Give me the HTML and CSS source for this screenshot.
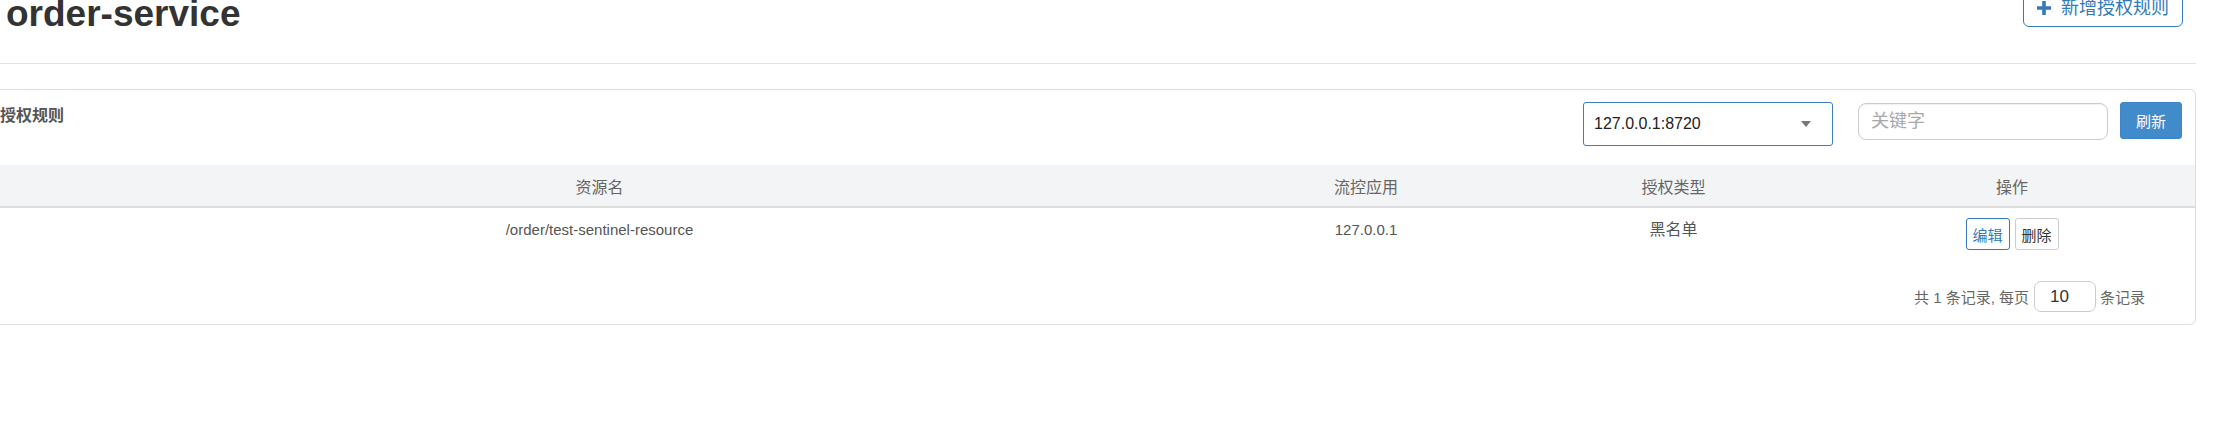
FILE: index.html
```html
<!DOCTYPE html>
<html lang="zh-CN">
<head>
<meta charset="utf-8">
<title>order-service</title>
<link rel="stylesheet" href="styles.css">
</head>
<body>
<div class="page">
  <div class="top">
    <h1 class="title">order-service</h1>
    <button class="btn-add" type="button">
      <svg class="plus" viewBox="0 0 14 14" width="14" height="14" aria-hidden="true"><path d="M5.2 0h3.6v5.2H14v3.6H8.8V14H5.2V8.8H0V5.2h5.2z" fill="#337ab7"/></svg>
      <span>新增授权规则</span>
    </button>
  </div>
  <div class="divider"></div>
  <div class="card">
    <div class="card-head">
      <div class="card-title">授权规则</div>
      <div class="controls">
        <div class="select"><span>127.0.0.1:8720</span><i class="caret"></i></div>
        <input class="search" type="text" placeholder="关键字">
        <button class="btn-refresh" type="button">刷新</button>
      </div>
    </div>
    <table class="rules">
      <thead>
        <tr>
          <th class="c-res">资源名</th>
          <th class="c-app">流控应用</th>
          <th class="c-type">授权类型</th>
          <th class="c-op">操作</th>
        </tr>
      </thead>
      <tbody>
        <tr>
          <td>/order/test-sentinel-resource</td>
          <td>127.0.0.1</td>
          <td class="cjk">黑名单</td>
          <td>
            <div class="ops">
              <button class="btn-sm btn-edit" type="button">编辑</button>
              <button class="btn-sm btn-del" type="button">删除</button>
            </div>
          </td>
        </tr>
      </tbody>
    </table>
    <div class="pager">
      <span>共 1 条记录, 每页</span>
      <div class="page-size">10</div>
      <span>条记录</span>
    </div>
  </div>
</div>
</body>
</html>
```

FILE: styles.css
```css
html, body {
  margin: 0;
  padding: 0;
  background: #fff;
}
body {
  font-family: "Liberation Sans", "Noto Sans CJK SC", sans-serif;
  color: #555;
  overflow: hidden;
}
.page {
  margin: 0 28px 0 -16px;
}
.top {
  display: flex;
  justify-content: space-between;
  align-items: flex-start;
  margin-top: -11px;
  padding: 0 13px 0 22px;
}
.title {
  margin: 5px 0 0 0;
  font-size: 37px;
  line-height: 40px;
  font-weight: bold;
  color: #333;
}
.btn-add {
  box-sizing: border-box;
  height: 38px;
  width: 160px;
  display: flex;
  align-items: center;
  gap: 10px;
  padding: 0 13px;
  border: 1px solid #337ab7;
  border-radius: 6px;
  background: #fff;
  color: #337ab7;
  font-family: "Liberation Sans", "Noto Sans CJK SC", sans-serif;
  font-size: 18px;
  line-height: 20px;
}
.plus {
  display: block;
  flex: none;
}
.divider {
  height: 1px;
  background: #e3e3e3;
  margin-top: 29px;
}
.card {
  margin-top: 25px;
  border: 1px solid #ddd;
  border-radius: 6px;
  background: #fff;
  overflow: hidden;
}
.card-head {
  display: flex;
  justify-content: space-between;
  align-items: flex-start;
  padding: 12px 13px 19px 15px;
}
.card-title {
  margin-top: 4px;
  font-size: 16px;
  line-height: 20px;
  font-weight: 600;
  color: #555;
}
.controls {
  display: flex;
  align-items: flex-start;
}
.select {
  box-sizing: border-box;
  width: 250px;
  height: 44px;
  display: flex;
  align-items: center;
  justify-content: space-between;
  padding: 0 21px 0 10px;
  border: 1px solid #3b7dbd;
  border-radius: 3px;
  margin-right: 25px;
  color: #222;
  font-size: 16px;
}
.caret {
  width: 0;
  height: 0;
  border-left: 5px solid transparent;
  border-right: 5px solid transparent;
  border-top: 6px solid #777;
}
.search {
  box-sizing: border-box;
  width: 250px;
  height: 37px;
  margin: 1px 12px 0 0;
  padding: 0 12px;
  border: 1px solid #ccc;
  border-radius: 8px;
  box-shadow: inset 0 1px 1px rgba(0, 0, 0, 0.06);
  font-family: "Liberation Sans", "Noto Sans CJK SC", sans-serif;
  font-size: 18px;
  color: #555;
  outline: none;
}
.search::placeholder {
  color: #a8a8a8;
}
.btn-refresh {
  box-sizing: border-box;
  width: 62px;
  height: 37px;
  padding: 0;
  border: 1px solid #3f86c6;
  border-radius: 3px;
  background: #428bca;
  color: #fff;
  font-family: "Liberation Sans", "Noto Sans CJK SC", sans-serif;
  font-size: 15px;
}
.rules {
  width: 100%;
  border-collapse: collapse;
  table-layout: fixed;
}
.rules th,
.rules td {
  box-sizing: border-box;
}
.c-res { width: 1229px; }
.c-app { width: 304px; }
.c-type { width: 311px; }
.c-op { width: 366px; }
.rules th {
  height: 42px;
  padding: 0 8px;
  background: #f3f4f5;
  border-bottom: 2px solid #ddd;
  font-size: 16px;
  font-weight: normal;
  color: #666;
  text-align: center;
  vertical-align: middle;
}
.rules td {
  padding: 12px 8px 11px;
  font-size: 15px;
  line-height: 20px;
  color: #555;
  text-align: center;
  vertical-align: top;
}
.rules td.cjk {
  font-size: 16px;
}
.ops {
  display: flex;
  justify-content: center;
  gap: 5px;
  margin-top: -2px;
}
.btn-sm {
  box-sizing: border-box;
  width: 44px;
  height: 32px;
  padding: 0;
  border: 1px solid #ccc;
  border-radius: 3px;
  background: #fff;
  font-family: "Liberation Sans", "Noto Sans CJK SC", sans-serif;
  font-size: 15px;
  color: #333;
}
.btn-edit {
  border-color: #337ab7;
  color: #337ab7;
}
.pager {
  display: flex;
  justify-content: flex-end;
  align-items: center;
  padding: 20px 50px 12px 0;
  font-size: 15px;
  color: #666;
}
.page-size {
  box-sizing: border-box;
  width: 62px;
  height: 31px;
  margin: 0 4px 0 5px;
  padding-left: 15px;
  border: 1px solid #ccc;
  border-radius: 7px;
  display: flex;
  align-items: center;
  font-size: 17px;
  color: #333;
}
```
